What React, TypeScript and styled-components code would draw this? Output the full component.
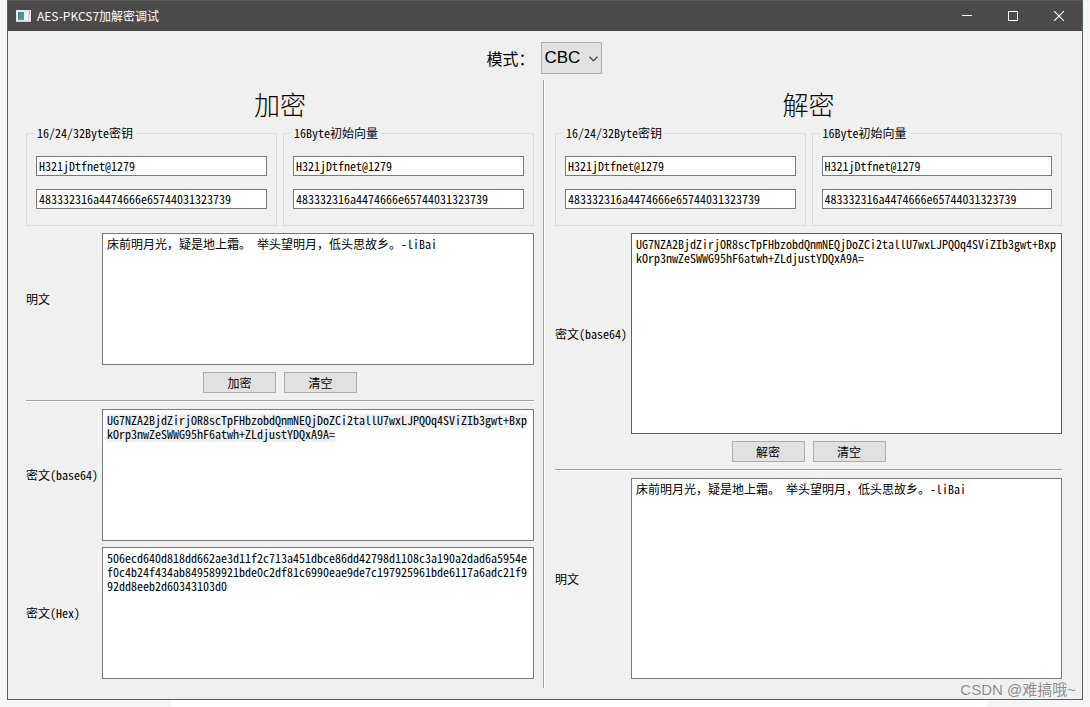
import React, { useState } from "react";
import styled, { createGlobalStyle } from "styled-components";

const GlobalStyle = createGlobalStyle`
  *, *::before, *::after { box-sizing: border-box; }
  body {
    margin: 0;
    background: #f4f5f7;
    color: #000;
    font-family: "Noto Sans CJK SC", "Liberation Sans", sans-serif;
    font-size: 12px;
    line-height: 14px;
    font-feature-settings: "hwid";
  }
  button, input, textarea, select { font: inherit; font-feature-settings: inherit; color: inherit; }
`;

const Page = styled.div`
  display: flex;
  flex-direction: column;
  min-height: 100vh;
`;

const Window = styled.main`
  position: relative;
  flex: 1;
  display: flex;
  flex-direction: column;
  margin: 0 7px;
  background: #f0f0f0;
  border: 1px solid #5b5a58;
  border-top: 0;
`;

const PageStrip = styled.div`
  height: 7px;
  padding: 0 103px 0 171px;

  &::before {
    content: "";
    display: block;
    height: 100%;
    background: #fff;
  }
`;

const TitleBar = styled.header`
  display: flex;
  align-items: center;
  height: 31px;
  padding-left: 8px;
  background: #4c4a48;
  border-top: 1px solid #5b5a58;
  color: #fff;
`;

const WindowTitle = styled.h1`
  flex: 1;
  margin: 0 0 0 5px;
  font-feature-settings: normal;
  font-size: 12px;
  font-weight: 400;
  line-height: 16px;
`;

const CaptionButton = styled.button`
  display: flex;
  align-items: center;
  justify-content: center;
  width: 46px;
  height: 29px;
  padding: 0;
  border: 0;
  background: transparent;
`;

const ModeRow = styled.div`
  display: flex;
  align-items: center;
  justify-content: center;
  gap: 6px;
  padding: 11px 2px 6px 0;
`;

const ModeLabel = styled.label`
  font-size: 16px;
  line-height: 20px;
`;

const SelectBox = styled.div`
  position: relative;
  width: 61px;
  height: 32px;

  svg {
    position: absolute;
    right: 4px;
    top: 14px;
    pointer-events: none;
  }
`;

const ModeSelect = styled.select`
  width: 100%;
  height: 100%;
  padding: 0 0 0 3px;
  appearance: none;
  border: 1px solid #adadad;
  border-radius: 0;
  background: #e1e1e1;
  font-family: "Liberation Sans", Arial, sans-serif;
  font-size: 17px;
  line-height: 20px;
`;

const Columns = styled.div`
  flex: 1;
  display: grid;
  grid-template-columns: 1fr 2px 1fr;
  padding: 0 20px 11px 18px;
`;

const Column = styled.section<{ $side: "left" | "right" }>`
  display: flex;
  flex-direction: column;
  min-width: 0;
  padding: ${(p) => (p.$side === "left" ? "0 9px 9px 0" : "0 0 9px 10px")};
`;

const VerticalRule = styled.div`
  border-left: 1px solid #a0a0a0;
  border-right: 1px solid #fff;
`;

const HorizontalRule = styled.hr`
  width: 100%;
  height: 2px;
  margin: 7px 0;
  border: 0;
  border-top: 1px solid #a0a0a0;
  border-bottom: 1px solid #fff;
`;

const ColumnTitle = styled.h2`
  margin: 0;
  padding: 4px 0 2px;
  font-size: 26px;
  font-weight: 300;
  line-height: 40px;
  text-align: center;
`;

const GroupRow = styled.div`
  display: grid;
  grid-template-columns: 1fr 1fr;
  gap: 6px;
  margin-bottom: 7px;
`;

const Group = styled.fieldset`
  min-width: 0;
  margin: 0;
  padding: 16px 7px;
  border: 1px solid #dcdcdc;

  legend {
    padding: 0 3px;
  }
`;

const GroupFields = styled.div`
  display: flex;
  flex-direction: column;
  gap: 13px;
  padding: 0 2px;
`;

const TextInput = styled.input`
  width: 100%;
  height: 20px;
  padding: 0 2px 2px;
  border: 1px solid #7a7a7a;
  border-radius: 0;
  background: #fff;
  outline: none;
`;

const FieldRow = styled.div`
  flex: 1;
  display: grid;
  grid-template-columns: 76px 1fr;
  align-items: center;

  & + & {
    margin-top: 6px;
  }
`;

const TextBox = styled.textarea<{ $active?: boolean; $marked?: boolean; $prose?: boolean }>`
  display: block;
  width: 100%;
  height: 100%;
  padding: 3px 4px;
  resize: none;
  border: 1px solid ${(p) => (p.$active ? "#0078d7" : "#7a7a7a")};
  border-radius: 0;
  background-color: #fff;
  background-repeat: no-repeat;
  outline: none;
  word-break: break-all;

  ${(p) =>
    p.$marked &&
    `
    background-image: linear-gradient(#f0f0f0, #f0f0f0), linear-gradient(#f0f0f0, #f0f0f0);
    background-position: 4px 4px, 4px 18px;
    background-size: 420px 14px, 228px 14px;
  `}

  ${(p) =>
    p.$prose &&
    `
    font-family: "Noto Sans Mono CJK SC", "Noto Sans CJK SC", sans-serif;
    font-feature-settings: normal;
  `}
`;

const ButtonRow = styled.div`
  display: flex;
  justify-content: center;
  gap: 8px;
  margin-top: 7px;
`;

const PushButton = styled.button`
  width: 73px;
  height: 21px;
  padding: 0;
  border: 1px solid #adadad;
  background: #e1e1e1;
`;

const Watermark = styled.span`
  position: absolute;
  right: 6px;
  bottom: 0;
  color: #8c8c8c;
  font-family: "Liberation Sans", "Noto Sans CJK SC", sans-serif;
  font-size: 15px;
  line-height: 18px;
  text-shadow: 0 0 1px #fff;
`;

const ASCII_KEY = "H321jDtfnet@1279";
const HEX_KEY = "483332316a4474666e65744031323739";
const POEM = "床前明月光，疑是地上霜。 举头望明月，低头思故乡。-liBai";
const CIPHER_BASE64 =
  "UG7NZA2BjdZirjOR8scTpFHbzobdQnmNEQjDoZCi2tallU7wxLJPQOq4SViZIb3gwt+BxpkOrp3nwZeSWWG95hF6atwh+ZLdjustYDQxA9A=";
const CIPHER_HEX =
  "506ecd640d818dd662ae3d11f2c713a451dbce86dd42798d1108c3a190a2dad6a5954ef0c4b24f434ab849589921bde0c2df81c6990eae9de7c197925961bde6117a6adc21f992dd8eeb2d60343103d0";

function AppIcon() {
  return (
    <svg width="16" height="14" viewBox="0 0 16 14" aria-hidden="true">
      <defs>
        <linearGradient id="screen" x1="0" y1="0" x2="1" y2="1">
          <stop offset="0" stopColor="#4a7fb0" />
          <stop offset="1" stopColor="#4fa37c" />
        </linearGradient>
      </defs>
      <rect x="0" y="1" width="15" height="12" fill="#e4e8eb" />
      <rect x="2" y="3" width="6" height="8" fill="url(#screen)" />
      <rect x="8" y="3" width="4" height="8" fill="#f4f4f4" />
      <rect x="12" y="3" width="1" height="8" fill="#d5d9dc" />
      <rect x="13" y="2" width="1" height="3" fill="#8fc4b6" />
      <rect x="0" y="12" width="15" height="1" fill="#c9cdd0" />
    </svg>
  );
}

function KeyGroup({ title }: { title: string }) {
  const [ascii, setAscii] = useState(ASCII_KEY);
  const [hex, setHex] = useState(HEX_KEY);
  return (
    <Group>
      <legend>{title}</legend>
      <GroupFields>
        <TextInput aria-label={`${title} ASCII`} value={ascii} onChange={(e) => setAscii(e.target.value)} />
        <TextInput aria-label={`${title} Hex`} value={hex} onChange={(e) => setHex(e.target.value)} />
      </GroupFields>
    </Group>
  );
}

function KeyGroups() {
  return (
    <GroupRow>
      <KeyGroup title="16/24/32Byte密钥" />
      <KeyGroup title="16Byte初始向量" />
    </GroupRow>
  );
}

interface FieldProps {
  id: string;
  label: string;
  text: string;
  active?: boolean;
  marked?: boolean;
  prose?: boolean;
}

function Field({ id, label, text, active, marked, prose }: FieldProps) {
  return (
    <FieldRow>
      <label htmlFor={id}>{label}</label>
      <TextBox id={id} $active={active} $marked={marked} $prose={prose} defaultValue={text} spellCheck={false} />
    </FieldRow>
  );
}

export default function App() {
  return (
    <Page>
      <GlobalStyle />
      <Window>
        <TitleBar>
          <AppIcon />
          <WindowTitle>AES-PKCS7加解密调试</WindowTitle>
          <CaptionButton type="button" aria-label="最小化">
            <svg width="10" height="10" viewBox="0 0 10 10" stroke="#fff">
              <path d="M0 4.5h10" />
            </svg>
          </CaptionButton>
          <CaptionButton type="button" aria-label="最大化">
            <svg width="10" height="10" viewBox="0 0 10 10" stroke="#fff" fill="none">
              <path d="M.5.5h9v9h-9z" />
            </svg>
          </CaptionButton>
          <CaptionButton type="button" aria-label="关闭">
            <svg width="10" height="10" viewBox="0 0 10 10" stroke="#fff" strokeWidth="1.2">
              <path d="M0 0l10 10M10 0L0 10" />
            </svg>
          </CaptionButton>
        </TitleBar>

        <ModeRow>
          <ModeLabel htmlFor="mode">模式：</ModeLabel>
          <SelectBox>
            <ModeSelect id="mode" defaultValue="CBC">
              <option>CBC</option>
              <option>ECB</option>
            </ModeSelect>
            <svg width="9" height="6" viewBox="0 0 9 6" fill="none" stroke="#505050" strokeWidth="1.3">
              <path d="M.5.8l4 4 4-4" />
            </svg>
          </SelectBox>
        </ModeRow>

        <Columns>
          <Column $side="left">
            <ColumnTitle>加密</ColumnTitle>
            <KeyGroups />
            <Field id="enc-plain" label="明文" text={POEM} prose />
            <ButtonRow>
              <PushButton type="button">加密</PushButton>
              <PushButton type="button">清空</PushButton>
            </ButtonRow>
            <HorizontalRule />
            <Field id="enc-base64" label="密文(base64)" text={CIPHER_BASE64} marked />
            <Field id="enc-hex" label="密文(Hex)" text={CIPHER_HEX} />
          </Column>
          <VerticalRule />
          <Column $side="right">
            <ColumnTitle>解密</ColumnTitle>
            <KeyGroups />
            <Field id="dec-base64" label="密文(base64)" text={CIPHER_BASE64} active />
            <ButtonRow>
              <PushButton type="button">解密</PushButton>
              <PushButton type="button">清空</PushButton>
            </ButtonRow>
            <HorizontalRule />
            <Field id="dec-plain" label="明文" text={POEM} prose />
          </Column>
        </Columns>
        <Watermark>CSDN @难搞哦~</Watermark>
      </Window>
      <PageStrip />
    </Page>
  );
}
